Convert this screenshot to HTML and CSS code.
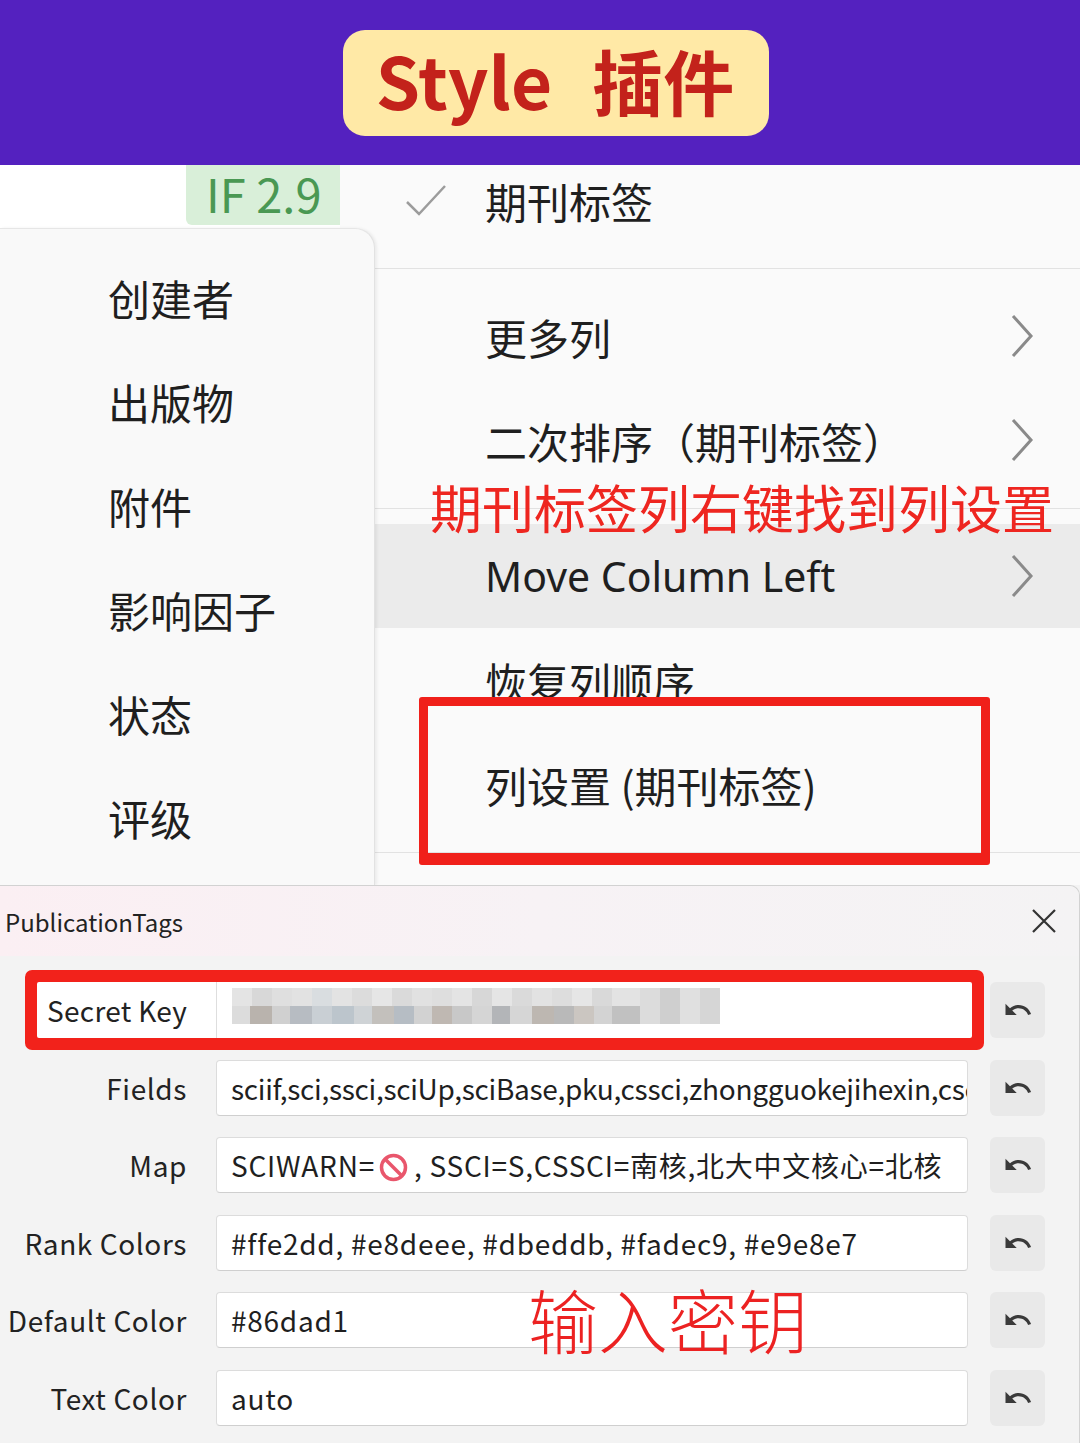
FILE: index.html
```html
<!DOCTYPE html>
<html lang="zh-CN">
<head>
  <meta charset="UTF-8" />
  <meta name="viewport" content="width=device-width, initial-scale=1.0"/>
  <title>Style 插件</title>
  <link rel="stylesheet" href="styles.css">
</head>
<body>
  <header class="banner">
    <div class="pill">Style<span class="pill-cn">插件</span></div>
  </header>

  <section class="scene">
    <div class="side">
      <div class="side-top"><div class="badge">IF 2.9</div></div>
      <ul class="side-panel">
        <li>创建者</li>
        <li>出版物</li>
        <li>附件</li>
        <li>影响因子</li>
        <li>状态</li>
        <li>评级</li>
      </ul>
    </div>

    <div class="menu">
      <div class="menu-item">
        <span class="menu-icon">
          <svg width="42" height="32" viewBox="0 0 42 32"><polyline points="2,18 14,30 40,2" fill="none" stroke="#9c9c9c" stroke-width="2.5"/></svg>
        </span>
        <span class="menu-label">期刊标签</span>
      </div>
      <div class="sep"></div>
      <div class="menu-item">
        <span class="menu-icon"></span>
        <span class="menu-label">更多列</span>
        <svg class="chev" width="24" height="44" viewBox="0 0 24 44"><polyline points="3,2 21,22 3,42" fill="none" stroke="#8a8a8a" stroke-width="3"/></svg>
      </div>
      <div class="menu-item">
        <span class="menu-icon"></span>
        <span class="menu-label">二次排序（期刊标签）</span>
        <svg class="chev" width="24" height="44" viewBox="0 0 24 44"><polyline points="3,2 21,22 3,42" fill="none" stroke="#8a8a8a" stroke-width="3"/></svg>
      </div>
      <div class="sep"></div>
      <div class="menu-item active">
        <span class="menu-icon"></span>
        <span class="menu-label latin">Move Column Left</span>
        <svg class="chev" width="24" height="44" viewBox="0 0 24 44"><polyline points="3,2 21,22 3,42" fill="none" stroke="#8a8a8a" stroke-width="3"/></svg>
      </div>
      <div class="menu-item">
        <span class="menu-icon"></span>
        <span class="menu-label">恢复列顺序</span>
      </div>
      <div class="menu-item">
        <span class="menu-icon"></span>
        <span class="menu-label">列设置 (期刊标签)</span>
      </div>
      <div class="sep"></div>
    </div>

    <div class="hint">期刊标签列右键找到列设置</div>
    <div class="mark"></div>
  </section>

  <section class="dialog">
    <div class="dialog-head">
      <span class="dialog-title">PublicationTags</span>
      <svg width="26" height="26" viewBox="0 0 26 26"><path d="M2 2 L24 24 M24 2 L2 24" stroke="#333" stroke-width="2.2" fill="none"/></svg>
    </div>

    <div class="form">
      <div class="row">
        <div class="key-group">
          <div class="key-label">Secret Key</div>
          <div class="key-input"><div class="blur"></div></div>
        </div>
        <button class="reset key-reset"><svg width="30" height="30" viewBox="0 0 24 24"><path d="M12.5 8c-2.65 0-5.05.99-6.9 2.6L2 7v9h9l-3.62-3.62c1.39-1.16 3.16-1.88 5.12-1.88 3.54 0 6.55 2.31 7.6 5.5l2.37-.78C21.08 11.03 17.15 8 12.5 8z" fill="#3a3a3a"/></svg></button>
      </div>
      <div class="row">
        <label class="label">Fields</label>
        <div class="field dense">sciif,sci,ssci,sciUp,sciBase,pku,cssci,zhongguokejihexin,cscd</div>
        <button class="reset"><svg width="30" height="30" viewBox="0 0 24 24"><path d="M12.5 8c-2.65 0-5.05.99-6.9 2.6L2 7v9h9l-3.62-3.62c1.39-1.16 3.16-1.880 5.12-1.88 3.54 0 6.55 2.31 7.6 5.5l2.37-.78C21.08 11.03 17.15 8 12.5 8z" fill="#3a3a3a"/></svg></button>
      </div>
      <div class="row">
        <label class="label">Map</label>
        <div class="field">SCIWARN=<svg class="ban" width="29" height="29" viewBox="0 0 29 29"><circle cx="14.5" cy="14.5" r="12" fill="none" stroke="#e9566c" stroke-width="3.5"/><path d="M6 6 L23 23" stroke="#e9566c" stroke-width="3.5"/></svg>, SSCI=S,CSSCI=南核,北大中文核心=北核</div>
        <button class="reset"><svg width="30" height="30" viewBox="0 0 24 24"><path d="M12.5 8c-2.65 0-5.05.99-6.9 2.6L2 7v9h9l-3.62-3.62c1.39-1.16 3.16-1.88 5.12-1.88 3.54 0 6.55 2.31 7.6 5.5l2.37-.78C21.08 11.03 17.15 8 12.5 8z" fill="#3a3a3a"/></svg></button>
      </div>
      <div class="row">
        <label class="label">Rank Colors</label>
        <div class="field">#ffe2dd, #e8deee, #dbeddb, #fadec9, #e9e8e7</div>
        <button class="reset"><svg width="30" height="30" viewBox="0 0 24 24"><path d="M12.5 8c-2.65 0-5.05.99-6.9 2.6L2 7v9h9l-3.62-3.62c1.39-1.16 3.16-1.88 5.12-1.88 3.54 0 6.55 2.31 7.6 5.5l2.37-.78C21.08 11.03 17.15 8 12.5 8z" fill="#3a3a3a"/></svg></button>
      </div>
      <div class="row">
        <label class="label">Default Color</label>
        <div class="field">#86dad1</div>
        <button class="reset"><svg width="30" height="30" viewBox="0 0 24 24"><path d="M12.5 8c-2.65 0-5.05.99-6.9 2.6L2 7v9h9l-3.62-3.62c1.39-1.16 3.16-1.88 5.12-1.88 3.54 0 6.55 2.31 7.6 5.5l2.37-.78C21.08 11.03 17.15 8 12.5 8z" fill="#3a3a3a"/></svg></button>
      </div>
      <div class="row">
        <label class="label">Text Color</label>
        <div class="field">auto</div>
        <button class="reset"><svg width="30" height="30" viewBox="0 0 24 24"><path d="M12.5 8c-2.65 0-5.05.99-6.9 2.6L2 7v9h9l-3.62-3.62c1.39-1.16 3.16-1.88 5.12-1.88 3.54 0 6.55 2.31 7.6 5.5l2.37-.78C21.08 11.03 17.15 8 12.5 8z" fill="#3a3a3a"/></svg></button>
      </div>
    </div>

    <div class="note">输入密钥</div>
  </section>
</body>
</html>
```

FILE: styles.css
```css
* {
  box-sizing: border-box;
}

body {
  margin: 0;
  width: 1080px;
  height: 1443px;
  overflow: hidden;
  font-family: "Noto Sans CJK SC", "Noto Sans", sans-serif;
  color: #1f1f1f;
  background: #f3f3f3;
}

/* banner */
.banner {
  height: 165px;
  background: #5421bf;
  display: flex;
  align-items: center;
  justify-content: center;
  padding-left: 32px;
}

.pill {
  height: 106px;
  padding: 0 35px 6px 33px;
  background: #ffe9a6;
  border-radius: 22px;
  display: flex;
  align-items: center;
  font-size: 71px;
  font-weight: 700;
  color: #c3221b;
  line-height: 1;
}

.pill-cn {
  margin-left: 40px;
}

/* context menu scene */
.scene {
  position: relative;
  height: 720px;
  display: flex;
  background: #fafafa;
  overflow: hidden;
}

.side {
  width: 375px;
  margin-right: -35px;
  position: relative;
  z-index: 2;
  display: flex;
  flex-direction: column;
}

.side-top {
  height: 65px;
  width: 340px;
  background: #fff;
  display: flex;
  justify-content: flex-end;
}

.badge {
  width: 154px;
  height: 60px;
  background: #d9efd9;
  border-bottom-left-radius: 6px;
  color: #4a9853;
  font-size: 47px;
  line-height: 56px;
  padding-left: 20px;
  white-space: nowrap;
}

.side-panel {
  flex: 1;
  margin: 0;
  padding: 16px 0;
  list-style: none;
  background: #f9f9f9;
  border-top: 1px solid #e6e6e6;
  border-right: 1px solid #e2e2e2;
  border-top-right-radius: 20px;
  box-shadow: 2px 0 3px rgba(0, 0, 0, 0.06);
}

.side-panel li {
  height: 104px;
  display: flex;
  align-items: center;
  padding-left: 108px;
  font-size: 42px;
}

.menu {
  flex: 1;
  margin-top: -17px;
  padding-left: 35px;
  display: flex;
  flex-direction: column;
}

.menu-item {
  height: 104px;
  flex-shrink: 0;
  display: flex;
  align-items: center;
  padding: 0 46px 0 30px;
  font-size: 42px;
}

.menu-item.active {
  background: #ebebeb;
}

.menu-icon {
  width: 80px;
  display: flex;
  align-items: center;
}

.menu-label {
  flex: 1;
}

.menu-label.latin {
  font-family: "Noto Sans", sans-serif;
  font-size: 41px;
}

.sep {
  height: 1px;
  flex-shrink: 0;
  margin: 16px 0 15px;
  background: #e2e2e2;
}

.hint {
  position: absolute;
  left: 430px;
  top: 316px;
  z-index: 3;
  font-size: 52px;
  line-height: 1;
  color: #ee2620;
  white-space: nowrap;
}

.mark {
  position: absolute;
  left: 419px;
  top: 532px;
  width: 571px;
  height: 168px;
  z-index: 3;
  border: 9px solid #f0201a;
  border-bottom-width: 12px;
  border-radius: 3px;
}

/* settings dialog */
.dialog {
  position: relative;
  z-index: 4;
  height: 558px;
  background: #f3f3f3;
  border-top: 1px solid #d2d2d2;
  border-right: 1px solid #d2d2d2;
  border-top-right-radius: 10px;
}

.dialog-head {
  height: 70px;
  display: flex;
  align-items: center;
  justify-content: space-between;
  padding: 0 22px 0 5px;
  background: linear-gradient(90deg, #fbeff3 0%, #f7f2f5 50%, #f4f3f4 100%);
  border-top-right-radius: 10px;
}

.dialog-title {
  font-size: 24px;
  color: #222;
}

.form {
  padding-top: 26px;
  display: flex;
  flex-direction: column;
  gap: 21.6px;
}

.row {
  height: 56px;
  display: flex;
  align-items: stretch;
}

.label {
  width: 187px;
  text-align: right;
  font-size: 28px;
  letter-spacing: 0.6px;
  line-height: 56px;
  color: #222;
  white-space: nowrap;
}

.field {
  width: 752px;
  margin-left: 29px;
  background: #fff;
  border: 1px solid #dcdcdc;
  border-bottom-color: #cfcfcf;
  border-radius: 4px;
  padding: 0 14px;
  font-size: 28px;
  letter-spacing: 0.75px;
  line-height: 54px;
  white-space: nowrap;
  overflow: hidden;
  color: #1f1f1f;
}

.field.dense {
  letter-spacing: -0.3px;
}

.ban {
  vertical-align: -5px;
  margin: 0 6px 0 4px;
}

.reset {
  width: 55px;
  margin-left: 22px;
  border: none;
  border-radius: 6px;
  background: #e9e9e9;
  padding: 0;
  display: flex;
  align-items: center;
  justify-content: center;
}

.key-group {
  margin-left: 37px;
  width: 935px;
  display: flex;
  background: #fff;
  border-radius: 2px;
  box-shadow: 0 0 0 12px #f2221b;
}

.key-label {
  width: 180px;
  padding-left: 10px;
  font-size: 28px;
  letter-spacing: 0.3px;
  line-height: 56px;
  color: #222;
  border-right: 1px solid #dedede;
}

.key-input {
  flex: 1;
  padding: 6px 0 0 15px;
}

.blur {
  width: 488px;
  height: 36px;
  background:
    linear-gradient(90deg, transparent 0 408px, #dcdcdc 408px 428px, #cfcfcf 428px 448px, #e0e0e0 448px 468px, #d6d6d6 468px 488px) top / 100% 100% no-repeat,
    linear-gradient(90deg, #e4e4e4 0 20px, #d8d8d8 20px 40px, #dfdfdf 40px 60px, #e2e2e2 60px 80px, #d9dde0 80px 100px, #e3e3e3 100px 120px, #dcdcdc 120px 140px, #e6e6e6 140px 160px, #dadada 160px 180px, #e1e1e1 180px 200px, #dedede 200px 220px, #e4e4e4 220px 240px, #d7d7d7 240px 260px, #e5e5e5 260px 280px, #dadada 280px 300px, #e2e2e2 300px 320px, #dddddd 320px 340px, #e6e6e6 340px 360px, #d9d9d9 360px 380px, #e3e3e3 380px 408px) top / 100% 50% no-repeat,
    linear-gradient(90deg, #dcdcdc 0 18px, #b9b3ad 18px 40px, #d0d0d0 40px 58px, #b7bcc2 58px 80px, #c9cfd4 80px 100px, #bcc5cc 100px 122px, #cfd3d6 122px 140px, #c3c0bc 140px 162px, #b6bdc4 162px 182px, #d2d2d2 182px 200px, #bfb8b2 200px 220px, #c8c8c8 220px 240px, #d5d5d5 240px 260px, #b3b5b8 260px 278px, #d6d6d6 278px 300px, #bdb7b1 300px 322px, #b9b9b9 322px 342px, #cbc6c1 342px 362px, #d3d3d3 362px 380px, #c1c1c1 380px 408px) bottom / 100% 50% no-repeat;
}

.key-reset {
  margin-left: 18px;
}

.note {
  position: absolute;
  left: 528px;
  top: 398px;
  font-size: 70px;
  font-weight: 300;
  line-height: 1;
  color: #ec2222;
  white-space: nowrap;
}
```
